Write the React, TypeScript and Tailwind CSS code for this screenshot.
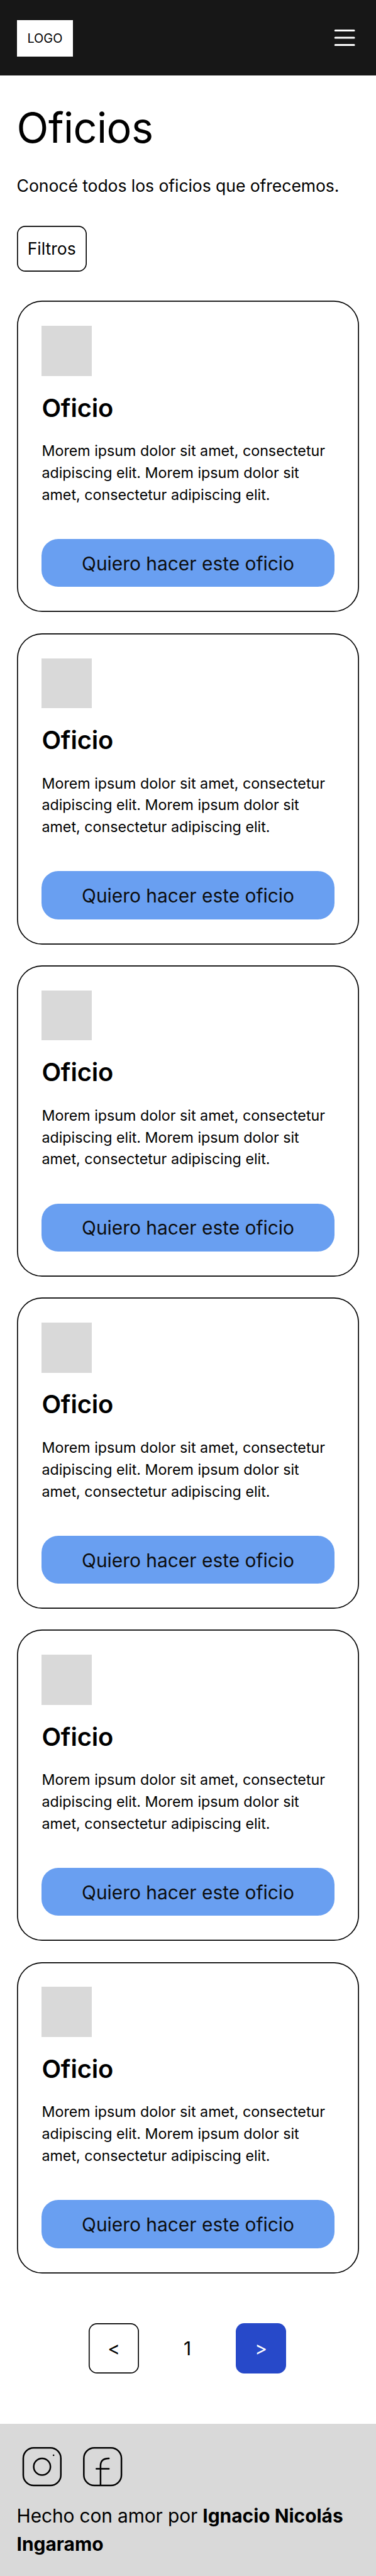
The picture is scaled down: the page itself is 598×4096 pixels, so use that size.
const CARDS = [1, 2, 3, 4, 5, 6];

const OUTLINE = "shadow-[inset_0_0_0_1.66px_#000]";

function Card() {
  return (
    <article className={`flex h-[495px] flex-col rounded-[39.87px] px-[39.87px] pt-[39.87px] ${OUTLINE}`}>
      <div className="size-[79.73px] bg-[#d9d9d9]" />
      <h2 className="mt-[20.7px] text-[39.87px] leading-[59.8px] font-semibold tracking-[-0.2px]">Oficio</h2>
      <p className="mt-[21.8px] text-[23.26px] leading-[34.88px]">
        Morem ipsum dolor sit amet, consectetur
        <br />
        adipiscing elit. Morem ipsum dolor sit
        <br />
        amet, consectetur adipiscing elit.
      </p>
      <button className="mt-[52.2px] h-[76.4px] w-full rounded-[26.58px] bg-[#699ff1] pt-[2px] text-[29.9px] text-[#0d0d0d]">
        Quiero hacer este oficio
      </button>
    </article>
  );
}

export default function App() {
  return (
    <div className="flex h-[4096px] w-[598px] flex-col overflow-hidden bg-white font-['Inter',sans-serif] text-black">
      <header className="flex h-[119.6px] shrink-0 items-center justify-between bg-[#171717] pr-[31px] pl-[26.58px]">
        <div className="mt-[2px] flex h-[58.14px] w-[89.7px] items-center justify-center bg-white pt-[1.4px] text-[19.93px]">
          LOGO
        </div>
        <svg className="h-[40px] w-[37px]" viewBox="0 0 37 40" fill="none" stroke="#fff" strokeWidth="3" strokeLinecap="round">
          <path d="M3.2 8.4H33.1M3.2 20H33.1M3.2 31.6H33.1" />
        </svg>
      </header>
      <main className="flex flex-col px-[26.58px]">
        <h1 className="mt-[34.3px] text-[66.44px] leading-[99.67px] tracking-[-0.5px]">Oficios</h1>
        <p className="mt-[22.4px] text-[26.58px] leading-[39.87px] tracking-[-0.075px]">
          Conocé todos los oficios que ofrecemos.
        </p>
        <button className={`mt-[43px] h-[73.1px] w-[111.3px] rounded-[13.29px] pt-[0.8px] text-[26.58px] ${OUTLINE}`}>
          Filtros
        </button>
        <section className="mt-[46.5px] flex flex-col gap-[33.23px]">
          {CARDS.map((id) => (
            <Card key={id} />
          ))}
        </section>
        <nav className="mt-[79.73px] ml-[114.6px] flex h-[79.73px] w-[313.95px] items-center justify-between text-[29.9px]">
          <button className={`size-[79.73px] rounded-[13.29px] ${OUTLINE}`}>&lt;</button>
          <span>1</span>
          <button className="size-[79.73px] rounded-[13.29px] bg-[#2749c9] text-white">&gt;</button>
        </nav>
      </main>
      <footer className="mt-[79.73px] flex-1 bg-[#d9d9d9] px-[26.58px] pt-[29.9px]">
        <svg className="h-[79.73px] w-[180px]" viewBox="48 7014 325 144" fill="none" stroke="#000" strokeWidth="4.5" strokeLinecap="round">
          <rect x="66" y="7029" width="108" height="108" rx="30" />
          <circle cx="120" cy="7083" r="24" />
          <circle cx="153" cy="7050" r="2.3" fill="#000" stroke="none" />
          <rect x="240" y="7029" width="108" height="108" rx="30" />
          <path d="M312 7059Q288 7059 288 7080V7136M276 7089H312" />
        </svg>
        <p className="mt-[15.2px] text-[29.9px] leading-[44.85px] tracking-[-0.13px]">
          Hecho con amor por <strong className="font-bold tracking-normal">Ignacio Nicolás Ingaramo</strong>
        </p>
      </footer>
    </div>
  );
}
